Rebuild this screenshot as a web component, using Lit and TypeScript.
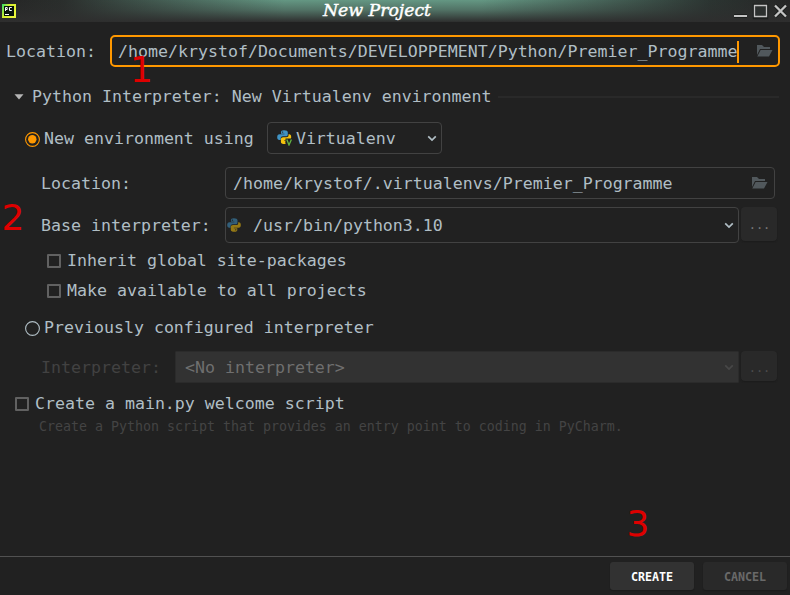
import { LitElement, html, css, svg } from "lit";
import { customElement } from "lit/decorators.js";

const folder = html`<svg class="folder" width="16" height="12" viewBox="0 0 16 12"><path d="M0 0H5L7 2H13V4H3L0 10Z M3.6 5H15.5L12 11.5H0.3Z" fill="#51585c"/></svg>`;
const chevron = (color: string) => html`<svg class="chevron" width="10" height="8" viewBox="0 0 10 8"><path d="M1.2 2.3L5 6L8.8 2.3" fill="none" stroke=${color} stroke-width="1.7"/></svg>`;
const snake = svg`
  <path d="M7 .2C4.8.2 4 .9 4 2.3V3.7H7.5V4.3H2.5C1 4.3.2 5.4.2 7.2S1 10 2.4 10H3.7V8.4C3.7 7 4.7 6.3 6 6.3H9C10.1 6.3 10.8 5.6 10.8 4.5V2.3C10.8.9 9.5.2 7 .2Z" fill="#4093c4"/>
  <path d="M7.6 14C9.8 14 10.6 13.3 10.6 11.9V10.5H7.1V9.9H12C13.5 9.9 14.2 8.8 14.2 7S13.5 4.2 12.1 4.2H11.5V5.5C11.5 6.6 10.7 7.2 9.3 7.2H6.2C4.8 7.2 3.9 8 3.9 9.2V11.9C3.9 13.3 5.3 14 7.6 14Z" fill="#f4c20d"/>
  <circle cx="5.6" cy="2.1" r=".7" fill="#212121"/><circle cx="9" cy="12.1" r=".7" fill="#212121"/>`;

@customElement("app-root")
export class AppRoot extends LitElement {
  static styles = css`
    :host {
      display: flex; flex-direction: column; position: relative;
      width: 790px; height: 595px; overflow: hidden; box-sizing: border-box;
      background: #212121; color: #b0bec5;
      font: 16.6px/20px "DejaVu Sans Mono", monospace; white-space: pre;
    }
    * { box-sizing: border-box; }
    svg { display: block; flex: none; }
    .title {
      display: flex; align-items: center; height: 22px; flex: none; padding: 0 2px;
      background: linear-gradient(180deg, rgba(48,48,48,0) 0%, rgba(46,46,46,.35) 45%, #2e2e2e 100%),
        linear-gradient(90deg, #252525 0%, #2a2e2c 8%, #649783 36%, #649783 61%, #2b3431 90%, #252525 100%);
    }
    .title h1 {
      flex: 1; margin: -2px 0 0; padding-left: 4px; text-align: center; color: #fff;
      font: italic 17.3px/20px "DejaVu Serif", serif; -webkit-text-stroke: .45px #fff;
    }
    .main { flex: 1; display: flex; flex-direction: column; padding-top: 13px; }
    .row { display: flex; align-items: center; flex: none; }
    .text { padding-top: 2px; }
    .field { display: flex; align-items: center; border: 1px solid #424242; border-radius: 4px; height: 32px; }
    .field .folder, .field .chevron { margin-left: auto; }
    .project { height: 32px; padding-left: 6px; }
    .project .field { width: 670px; margin-left: 14.1px; border: 2px solid #ff9800; border-radius: 5px; padding: 0 5px 0 6px; }
    .caret { width: 2px; height: 22px; background: #ff9800; margin-top: 1px; }
    .section { height: 20px; margin-top: 19px; padding: 0 11px 0 14px; }
    .section .arrow { margin: 1px 8px 0 0; }
    .rule { flex: 1; height: 2px; background: #292929; margin: 2px 0 0 6px; }
    .environment { height: 32px; margin-top: 16px; padding-left: 25px; }
    .environment .field { width: 175px; margin-left: 13.1px; padding: 0 4px 0 9px; }
    .radio { width: 15px; height: 15px; margin: 2px 4px 0 0; }
    .environment .snake { margin-right: 4px; }
    .venv { height: 32px; margin-top: 13px; padding-left: 41px; }
    .label { width: 184px; }
    .venv .field { width: 550px; padding: 0 6px 0 7px; }
    .base { height: 36px; margin-top: 8px; padding-left: 41px; align-items: flex-start; }
    .base .label { line-height: 38px; height: 36px; }
    .base .field { width: 514px; height: 36px; padding: 0 4px 0 1px; }
    .base .snake { opacity: .55; margin-right: 12px; }
    .more {
      width: 36px; height: 34px; margin-left: 2px; padding-left: 1px; border-radius: 4px; background: #292929;
      color: #777; font-size: 12px; line-height: 37px; text-align: center; box-shadow: 0 1px 1px #1c1c1c;
    }
    .check { height: 20px; padding-left: 47px; }
    .box { width: 14px; height: 14px; border: 2px solid #616161; border-radius: 1px; margin: 1px 6px 0 0; }
    .inherit { margin-top: 7px; }
    .shared { margin-top: 10px; }
    .previous { height: 20px; margin-top: 17px; padding-left: 25px; }
    .interpreter { height: 32px; margin-top: 14px; padding-left: 41px; align-items: flex-start; color: #424242; }
    .interpreter .label { width: 134px; line-height: 33px; }
    .interpreter .field { width: 564px; padding: 0 4px 0 9px; background: #323232; border-color: #2b2b2b; border-radius: 1px; color: #6f6f6f; }
    .interpreter .more { height: 30px; line-height: 35px; color: #4c4c4c; }
    .welcome { margin-top: 10px; padding-left: 15px; }
    .hint { padding-left: 39px; margin-top: 5px; font-size: 13.29px; color: #444; line-height: 18px; }
    .footer { display: flex; height: 39px; flex: none; border-top: 1px solid #515151; padding: 5px 3px 0 0; gap: 9px; justify-content: flex-end; }
    .button {
      width: 84px; height: 28px; border-radius: 3px; text-align: center;
      font-size: 11.7px; font-weight: bold; line-height: 30px;
      background: #292929; color: #696969; box-shadow: 0 1px 1px #1b1b1b;
    }
    .primary { background: #323232; color: #fff; }
    .mark { position: absolute; color: #de0000; font: 36px/36px "DejaVu Sans", sans-serif; }
    .one { left: 130px; top: 52px; }
    .two { left: 1.6px; top: 200px; }
    .three { left: 626.5px; top: 506px; }
  `;

  render() {
    return html`
      <div class="title"><svg width="14" height="14" viewBox="0 0 14 14"><defs><linearGradient id="edge" x1="0" x2="1" y1="0" y2="0.5"><stop offset="0" stop-color="#2bdc6b"/><stop offset=".45" stop-color="#d5ed2d"/><stop offset="1" stop-color="#e9f53b"/></linearGradient></defs><rect width="14" height="14" fill="url(#edge)"/><rect x="2" y="2" width="10" height="10" fill="#07130c"/><path d="M3.5 7V3.5H5.2V5.5H3.5M9.8 3.5H7.5V6.5H9.8M3 10.5H7" fill="none" stroke="#fff" stroke-width="1"/></svg><h1>New Project</h1><svg width="54" height="20" viewBox="0 0 54 20"><g fill="none" stroke="#1c1f1e" stroke-width="4"><path d="M0 15H13M20.8 4.8H32.2V16.2H20.8ZM41 4.5L52 15.5M52 4.5L41 15.5"/></g><path d="M0 15H13" stroke="#c4c4c4" stroke-width="2"/><path d="M20.5 4.5H32.5V15.5H20.5Z" fill="#2c302f" stroke="#c4c4c4" stroke-width="1.3"/><path d="M41 4.5L52 15.5M52 4.5L41 15.5" stroke="#c4c4c4" stroke-width="2.3"/></svg></div>
      <div class="main">
        <div class="row project"><span class="text">Location:</span><div class="field"><span class="text">/home/krystof/Documents/DEVELOPPEMENT/Python/Premier_Programme</span><i class="caret"></i>${folder}</div></div>
        <div class="row section"><svg class="arrow" width="10" height="6" viewBox="0 0 10 6"><path d="M.5 .3H9.5L5 5.5Z" fill="#b5b5b5"/></svg><span class="text">Python Interpreter: New Virtualenv environment</span><i class="rule"></i></div>
        <div class="row environment"><svg class="radio" viewBox="0 0 15 15"><circle cx="7.5" cy="7.5" r="6.9" fill="none" stroke="#ff9800" stroke-width="1.1"/><circle cx="7.3" cy="7.2" r="4.2" fill="#ff9800"/></svg><span class="text">New environment using</span><div class="field"><svg class="snake" width="15" height="16" viewBox="0 0 15 16">${snake}<path d="M8.5 8.5H15.5V16H8.5Z" fill="#212121"/><path d="M9.8 9.5L12 15L14.4 9.5" fill="none" stroke="#62b543" stroke-width="1.3"/></svg><span class="text">Virtualenv</span>${chevron("#b0bec5")}</div></div>
        <div class="row venv"><span class="text label">Location:</span><div class="field"><span class="text">/home/krystof/.virtualenvs/Premier_Programme</span>${folder}</div></div>
        <div class="row base"><span class="label">Base interpreter:</span><div class="field"><svg class="snake" width="14" height="14" viewBox="0 0 14.4 14.2">${snake}</svg><span class="text">/usr/bin/python3.10</span>${chevron("#b0bec5")}</div><div class="more">...</div></div>
        <div class="row check inherit"><i class="box"></i><span class="text">Inherit global site-packages</span></div>
        <div class="row check shared"><i class="box"></i><span class="text">Make available to all projects</span></div>
        <div class="row previous"><svg class="radio" viewBox="0 0 15 15"><circle cx="7.5" cy="7.5" r="6.9" fill="none" stroke="#b0bec5" stroke-width="1.1"/></svg><span class="text">Previously configured interpreter</span></div>
        <div class="row interpreter"><span class="label">Interpreter:</span><div class="field"><span class="text">&lt;No interpreter&gt;</span>${chevron("#474747")}</div><div class="more">...</div></div>
        <div class="row check welcome"><i class="box"></i><span class="text">Create a main.py welcome script</span></div>
        <div class="hint">Create a Python script that provides an entry point to coding in PyCharm.</div>
      </div>
      <div class="footer"><div class="button primary">CREATE</div><div class="button">CANCEL</div></div>
      <span class="mark one">1</span><span class="mark two">2</span><span class="mark three">3</span>
    `;
  }
}
